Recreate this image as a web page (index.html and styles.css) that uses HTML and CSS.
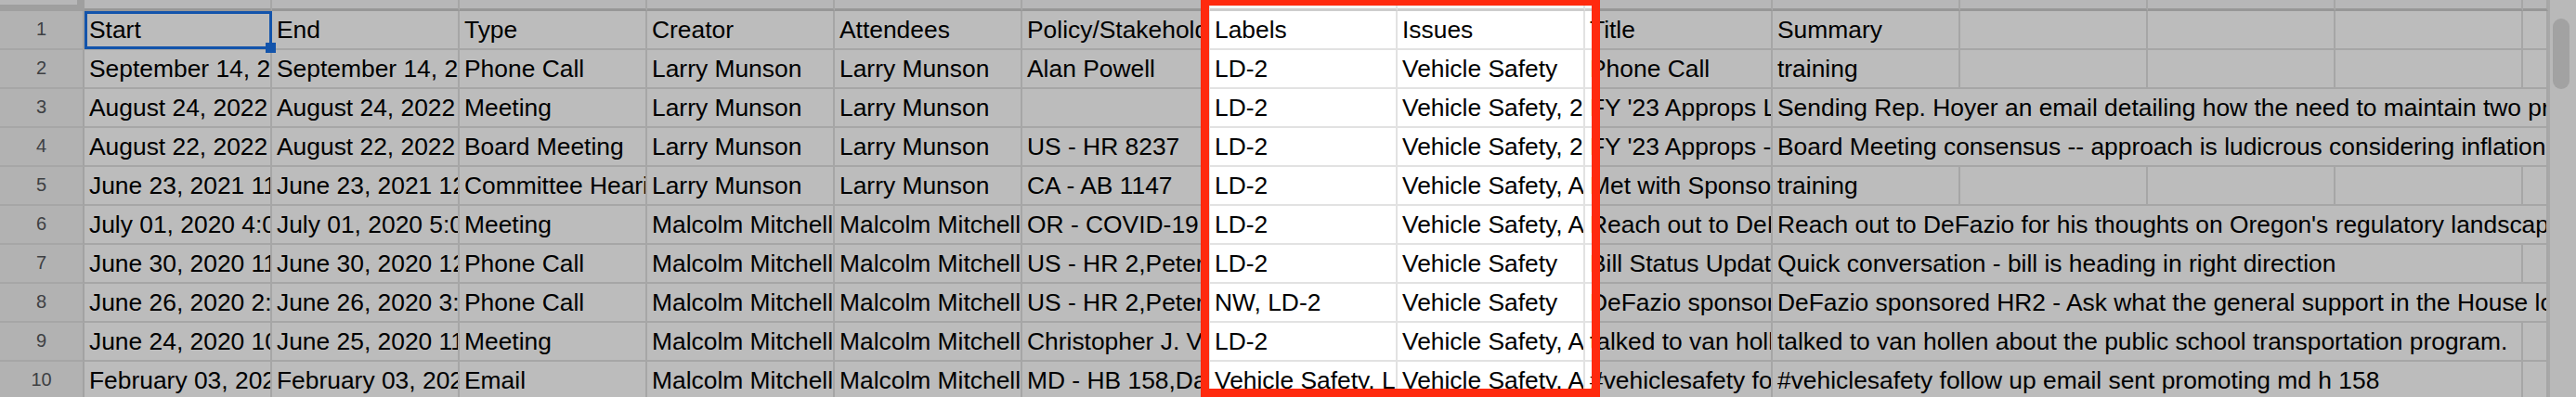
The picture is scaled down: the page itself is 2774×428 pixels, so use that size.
FILE: index.html
```html
<!DOCTYPE html>
<html lang="en">
<head>
<meta charset="utf-8">
<title>Sheet</title>
<link rel="stylesheet" href="styles.css">
</head>
<body>
<div class="sheet">
  <div class="grid">
    <div class="corner"></div>
    <div class="colhead"></div><div class="colhead"></div><div class="colhead"></div><div class="colhead"></div><div class="colhead"></div><div class="colhead"></div><div class="colhead"></div><div class="colhead"></div><div class="colhead"></div><div class="colhead"></div><div class="colhead"></div><div class="colhead"></div><div class="colhead"></div><div class="colhead"></div>

    <div class="rownum">1</div>
    <div class="cell sel">Start</div>
    <div class="cell">End</div>
    <div class="cell">Type</div>
    <div class="cell">Creator</div>
    <div class="cell">Attendees</div>
    <div class="cell">Policy/Stakeholder</div>
    <div class="cell">Labels</div>
    <div class="cell">Issues</div>
    <div class="cell">Title</div>
    <div class="cell">Summary</div>
    <div class="cell"></div><div class="cell"></div><div class="cell"></div><div class="cell"></div>

    <div class="rownum">2</div>
    <div class="cell">September 14, 2022 2:00 PM</div>
    <div class="cell">September 14, 2022 3:00 PM</div>
    <div class="cell">Phone Call</div>
    <div class="cell">Larry Munson</div>
    <div class="cell">Larry Munson</div>
    <div class="cell">Alan Powell</div>
    <div class="cell">LD-2</div>
    <div class="cell">Vehicle Safety</div>
    <div class="cell">Phone Call</div>
    <div class="cell">training</div>
    <div class="cell"></div><div class="cell"></div><div class="cell"></div><div class="cell"></div>

    <div class="rownum">3</div>
    <div class="cell">August 24, 2022 10:00 AM</div>
    <div class="cell">August 24, 2022 11:00 AM</div>
    <div class="cell">Meeting</div>
    <div class="cell">Larry Munson</div>
    <div class="cell">Larry Munson</div>
    <div class="cell"></div>
    <div class="cell">LD-2</div>
    <div class="cell">Vehicle Safety, 2022 Approps</div>
    <div class="cell">FY '23 Approps Letter</div>
    <div class="cell span5">Sending Rep. Hoyer an email detailing how the need to maintain two programs</div>

    <div class="rownum">4</div>
    <div class="cell">August 22, 2022 1:00 PM</div>
    <div class="cell">August 22, 2022 2:00 PM</div>
    <div class="cell">Board Meeting</div>
    <div class="cell">Larry Munson</div>
    <div class="cell">Larry Munson</div>
    <div class="cell">US - HR 8237</div>
    <div class="cell">LD-2</div>
    <div class="cell">Vehicle Safety, 2022 Approps</div>
    <div class="cell">FY '23 Approps - Board</div>
    <div class="cell span5">Board Meeting consensus -- approach is ludicrous considering inflation rates</div>

    <div class="rownum">5</div>
    <div class="cell">June 23, 2021 11:00 AM</div>
    <div class="cell">June 23, 2021 12:00 PM</div>
    <div class="cell">Committee Hearing</div>
    <div class="cell">Larry Munson</div>
    <div class="cell">Larry Munson</div>
    <div class="cell">CA - AB 1147</div>
    <div class="cell">LD-2</div>
    <div class="cell">Vehicle Safety, Automated Vehicles</div>
    <div class="cell">Met with Sponsor</div>
    <div class="cell">training</div>
    <div class="cell"></div><div class="cell"></div><div class="cell"></div><div class="cell"></div>

    <div class="rownum">6</div>
    <div class="cell">July 01, 2020 4:00 PM</div>
    <div class="cell">July 01, 2020 5:00 PM</div>
    <div class="cell">Meeting</div>
    <div class="cell">Malcolm Mitchell</div>
    <div class="cell">Malcolm Mitchell</div>
    <div class="cell">OR - COVID-19 Relief</div>
    <div class="cell">LD-2</div>
    <div class="cell">Vehicle Safety, Automated Vehicles</div>
    <div class="cell">Reach out to DeFazio</div>
    <div class="cell span5">Reach out to DeFazio for his thoughts on Oregon's regulatory landscape</div>

    <div class="rownum">7</div>
    <div class="cell">June 30, 2020 11:00 AM</div>
    <div class="cell">June 30, 2020 12:00 PM</div>
    <div class="cell">Phone Call</div>
    <div class="cell">Malcolm Mitchell</div>
    <div class="cell">Malcolm Mitchell</div>
    <div class="cell">US - HR 2,Peter DeFazio</div>
    <div class="cell">LD-2</div>
    <div class="cell">Vehicle Safety</div>
    <div class="cell">Bill Status Update</div>
    <div class="cell span4">Quick conversation - bill is heading in right direction</div>
    <div class="cell"></div>

    <div class="rownum">8</div>
    <div class="cell">June 26, 2020 2:00 PM</div>
    <div class="cell">June 26, 2020 3:00 PM</div>
    <div class="cell">Phone Call</div>
    <div class="cell">Malcolm Mitchell</div>
    <div class="cell">Malcolm Mitchell</div>
    <div class="cell">US - HR 2,Peter DeFazio</div>
    <div class="cell">NW, LD-2</div>
    <div class="cell">Vehicle Safety</div>
    <div class="cell">DeFazio sponsored HR2</div>
    <div class="cell span5">DeFazio sponsored HR2 - Ask what the general support in the House looks like</div>

    <div class="rownum">9</div>
    <div class="cell">June 24, 2020 10:00 AM</div>
    <div class="cell">June 25, 2020 11:00 AM</div>
    <div class="cell">Meeting</div>
    <div class="cell">Malcolm Mitchell</div>
    <div class="cell">Malcolm Mitchell</div>
    <div class="cell">Christopher J. Van Hollen</div>
    <div class="cell">LD-2</div>
    <div class="cell">Vehicle Safety, Automated Vehicles</div>
    <div class="cell">talked to van hollen</div>
    <div class="cell span4">talked to van hollen about the public school transportation program.</div>
    <div class="cell"></div>

    <div class="rownum">10</div>
    <div class="cell">February 03, 2020 9:00 AM</div>
    <div class="cell">February 03, 2020 9:30 AM</div>
    <div class="cell">Email</div>
    <div class="cell">Malcolm Mitchell</div>
    <div class="cell">Malcolm Mitchell</div>
    <div class="cell">MD - HB 158,Dan Cox</div>
    <div class="cell">Vehicle Safety, LD-2</div>
    <div class="cell">Vehicle Safety, Automated Vehicles</div>
    <div class="cell">#vehiclesafety follow up</div>
    <div class="cell span4">#vehiclesafety follow up email sent promoting md h 158</div>
    <div class="cell"></div>
  </div>
  <div class="scrollbar"><div class="thumb"></div></div>
</div>
<div class="spotlight"></div>
</body>
</html>
```

FILE: styles.css
```css
html, body {
  margin: 0;
  padding: 0;
  overflow: hidden;
  background: #ffffff;
}

body {
  position: relative;
  width: 2774px;
  height: 428px;
  font-family: "Liberation Sans", Arial, Helvetica, sans-serif;
  color: #000000;
}

.sheet {
  display: flex;
  width: 2774px;
  height: 428px;
  overflow: hidden;
}

.grid {
  display: grid;
  grid-template-columns: 91px repeat(13, 202px) 27px;
  grid-template-rows: 12px repeat(10, 42px);
  width: 2744px;
  flex: none;
}

.corner {
  box-sizing: border-box;
  background: #f8f9fa;
  border-right: 8px solid #d8d8d8;
  border-bottom: 7px solid #d8d8d8;
}

.colhead {
  box-sizing: border-box;
  background: #f8f9fa;
  border-right: 2px solid #e2e2e2;
  border-bottom: 3px solid #cdcdcd;
}

.rownum {
  box-sizing: border-box;
  background: #f2f2f2;
  border-right: 2px solid #dcdcdc;
  border-bottom: 2px solid #e2e2e2;
  color: #55585c;
  font-size: 20px;
  line-height: 38px;
  text-align: center;
}

.cell {
  box-sizing: border-box;
  background: #ffffff;
  border-right: 2px solid #e2e2e2;
  border-bottom: 2px solid #e2e2e2;
  padding: 0 5px;
  font-size: 26.4px;
  line-height: 40px;
  white-space: nowrap;
  overflow: hidden;
  min-width: 0;
}

.span4 {
  grid-column: span 4;
}

.span5 {
  grid-column: span 5;
}

.sel {
  position: relative;
  overflow: visible;
}

.sel::before {
  content: "";
  position: absolute;
  left: 0;
  top: 0;
  right: -2px;
  bottom: -1px;
  border: 3px solid #1a73e8;
  pointer-events: none;
}

.sel::after {
  content: "";
  position: absolute;
  right: -6px;
  bottom: -5px;
  width: 11px;
  height: 11px;
  background: #1a73e8;
}

.scrollbar {
  box-sizing: border-box;
  width: 30px;
  flex: none;
  background: #fbfbfb;
  border-left: 2px solid #e4e4e4;
  padding: 20px 0 0 3px;
}

.thumb {
  width: 18px;
  height: 76px;
  border-radius: 9px;
  background: #dcdcdc;
}

.spotlight {
  position: absolute;
  left: 1293px;
  top: -3px;
  width: 430px;
  height: 431px;
  box-sizing: border-box;
  border: 9px solid #ff2a0e;
  box-shadow: 0 0 0 4000px rgba(0, 0, 0, 0.263);
  pointer-events: none;
}
```
